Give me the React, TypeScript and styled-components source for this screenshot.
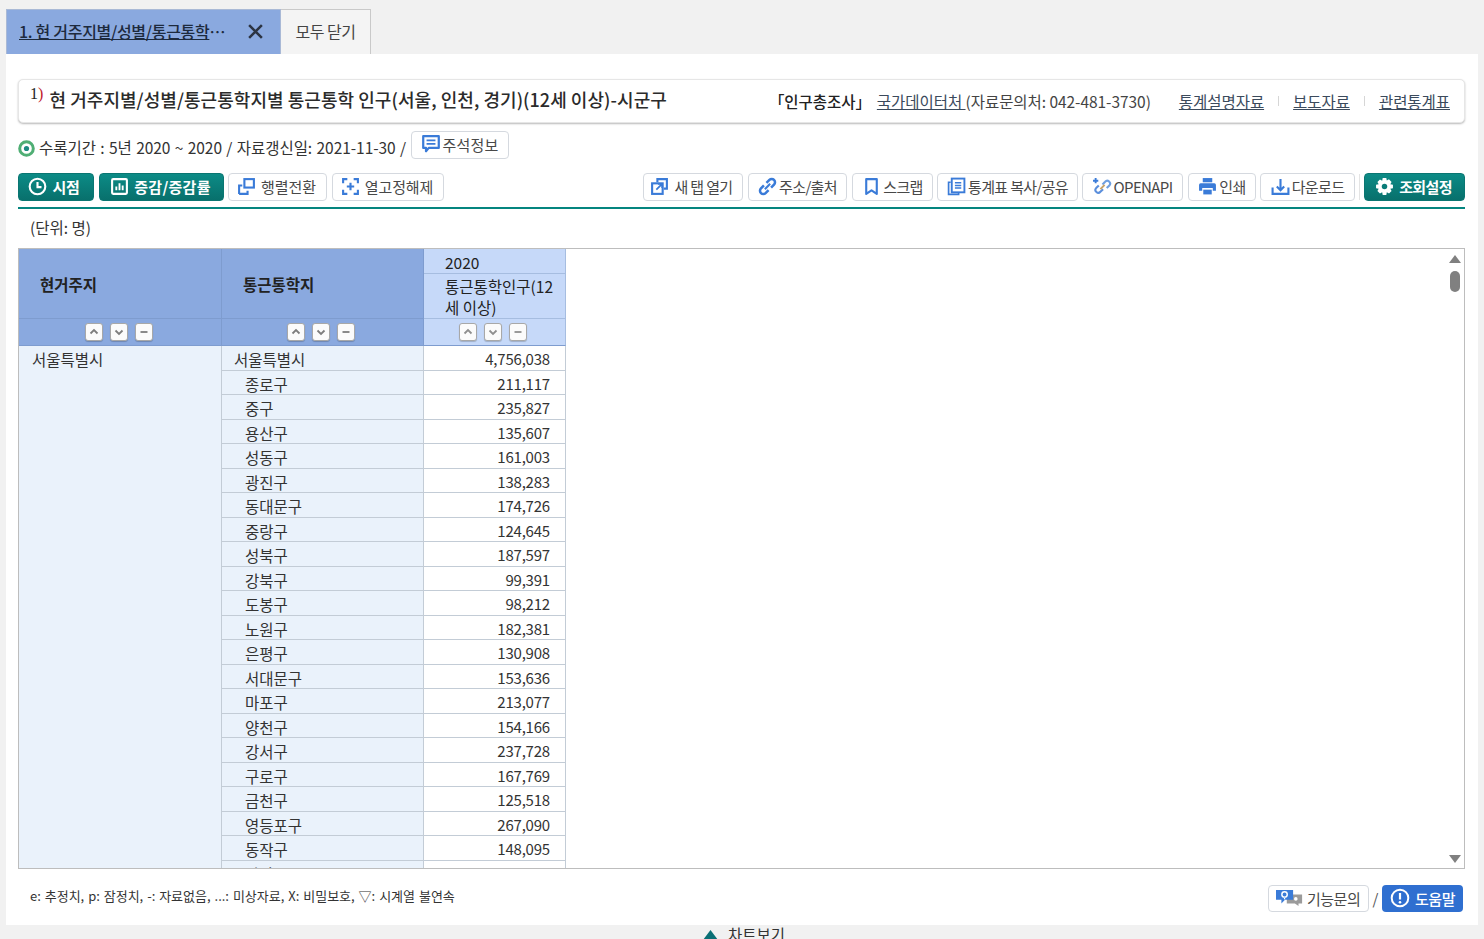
import React from "react";
import styled, { createGlobalStyle } from "styled-components";

const GlobalStyle = createGlobalStyle`
  html, body {
    margin: 0;
    padding: 0;
    background: #f1f1f1;
  }
  body {
    font-family: "Noto Sans CJK KR", "Noto Sans", sans-serif;
    color: #333;
  }
  * {
    box-sizing: border-box;
  }
`;

const Page = styled.div`
  width: 1484px;
  height: 939px;
  padding: 9px 6px 0;
  overflow: hidden;
  background: #f1f1f1;
`;

const TabBar = styled.div`
  display: flex;
  height: 45px;
`;

const ActiveTab = styled.div`
  display: flex;
  align-items: center;
  width: 275px;
  padding: 0 0 2px 12px;
  background: #8aa9df;
  border: 1px solid #a9b9d6;
  border-bottom: none;
  font-size: 16px;
  font-weight: 500;
  letter-spacing: -0.3px;
  color: #1d2a3d;
`;

const TabTitle = styled.span`
  text-decoration: underline;
  white-space: nowrap;
`;

const TabEllipsis = styled.span`
  margin-right: 22px;
`;

const CloseAllTab = styled.div`
  display: flex;
  align-items: center;
  justify-content: center;
  width: 90px;
  padding-bottom: 2px;
  background: #f4f4f4;
  border: 1px solid #c9c9c9;
  border-left: none;
  border-bottom: none;
  font-size: 16px;
  letter-spacing: -0.5px;
  color: #444;
`;

const Panel = styled.div`
  height: 871px;
  width: 1472px;
  padding: 25px 13px 0 12px;
  background: #fff;
`;

const TitleBar = styled.div`
  display: flex;
  align-items: center;
  justify-content: space-between;
  height: 44px;
  padding: 0 14px 0 11px;
  background: #fff;
  border: 1px solid #e6e6e6;
  border-radius: 5px;
  box-shadow: 0 1px 2px rgba(0, 0, 0, 0.28);
`;

const TitleText = styled.div`
  display: flex;
  align-items: center;
  margin-bottom: 4px;
  font-size: 18px;
  font-weight: 500;
  letter-spacing: 0.05px;
  color: #2b2b2b;
  white-space: nowrap;
`;

const Note = styled.sup`
  align-self: flex-start;
  margin: 0 6px 0 0;
  font-family: "Liberation Serif", serif;
  font-size: 16px;
  font-weight: 400;
  line-height: 1;
  color: #222;
  & > span {
    color: #c0202a;
  }
`;

const SourceBox = styled.div`
  display: flex;
  align-items: center;
  font-size: 15.5px;
  letter-spacing: -0.05px;
  color: #444;
  white-space: nowrap;
`;

const Survey = styled.span`
  margin-right: 6px;
  font-weight: 500;
  color: #222;
`;

const SourceLink = styled.a`
  color: #3b4a5c;
  text-decoration: underline;
  white-space: pre;
`;

const Contact = styled.span`
  margin-right: 28px;
`;

const Sep = styled.i`
  width: 1px;
  height: 10px;
  margin: 0 14px;
  background: #d6d6d6;
`;

const InfoRow = styled.div`
  display: flex;
  align-items: flex-start;
  gap: 4px;
  height: 29px;
  margin-top: 8px;
  font-size: 15.5px;
  letter-spacing: -0.05px;
  word-spacing: 1px;
  color: #333;
`;

const InfoText = styled.span`
  margin-top: 5px;
  line-height: 22px;
  white-space: nowrap;
`;

const InfoIcon = styled.svg`
  flex: none;
  width: 17px;
  height: 17px;
  margin-top: 9px;
`;

const Toolbar = styled.div`
  display: flex;
  align-items: flex-start;
  justify-content: space-between;
  height: 36px;
  margin-top: 13px;
  border-bottom: 2px solid #04857f;
`;

const ButtonGroup = styled.div`
  display: flex;
  align-items: center;
`;

const ToolButton = styled.button<{
  $w: number;
  $gap?: number;
  $spacing?: number;
  $iconGap?: number;
  $pad?: number;
}>`
  display: flex;
  align-items: center;
  justify-content: center;
  gap: ${({ $iconGap }) => $iconGap ?? 2}px;
  width: ${({ $w }) => $w}px;
  height: 28px;
  margin-left: ${({ $gap }) => $gap ?? 0}px;
  padding: 0 ${({ $pad }) => $pad ?? 0}px 2px 0;
  background: #fff;
  border: 1px solid #d5d9df;
  border-radius: 4px;
  font-family: inherit;
  font-size: 15px;
  letter-spacing: ${({ $spacing }) => $spacing ?? -0.65}px;
  word-spacing: 0;
  color: #484848;
  white-space: nowrap;
`;

const TealButton = styled(ToolButton)`
  background: linear-gradient(#0c8b86, #08706c);
  border: 1px solid #0a7672;
  font-weight: 700;
  color: #fff;
`;

const ToolDivider = styled.i`
  width: 1px;
  height: 26px;
  margin: 0 4px 0 4px;
  background: #e4e4e4;
`;

const Unit = styled.div`
  height: 39px;
  padding-left: 12px;
  font-size: 15.5px;
  line-height: 37px;
  color: #333;
`;

const TableBox = styled.div`
  display: flex;
  height: 621px;
  border: 1px solid #bdbdbd;
  overflow: hidden;
`;

const TableArea = styled.div`
  width: 547px;
  font-size: 15.5px;
`;

const HeadGrid = styled.div`
  display: grid;
  grid-template-columns: 203px 202px 142px;
  grid-template-rows: 25px 44px 28px;
`;

const HeadDim = styled.div`
  grid-row: 1 / span 2;
  display: flex;
  align-items: center;
  padding-left: 21px;
  background: #8aa9df;
  border-right: 1px solid #7e9ccf;
  font-weight: 700;
  color: #222;
`;

const HeadYear = styled.div`
  padding-left: 21px;
  background: #c6d9f9;
  border-bottom: 1px solid #a6bde0;
  border-right: 1px solid #a6bde0;
  line-height: 26px;
  color: #222;
`;

const HeadItem = styled.div`
  padding: 2px 8px 0 21px;
  background: #c6d9f9;
  border-right: 1px solid #a6bde0;
  line-height: 21px;
  color: #222;
`;

const SortCell = styled.div<{ $light?: boolean }>`
  display: flex;
  align-items: center;
  justify-content: center;
  gap: 7px;
  padding-right: 3px;
  background: ${({ $light }) => ($light ? "#c6d9f9" : "#8aa9df")};
  border-top: 1px solid ${({ $light }) => ($light ? "#a6bde0" : "#7e9ccf")};
  border-right: 1px solid ${({ $light }) => ($light ? "#a6bde0" : "#7e9ccf")};
  border-bottom: 1px solid #7e9ccf;
`;

const SortButton = styled.span`
  display: flex;
  align-items: center;
  justify-content: center;
  width: 18px;
  height: 18px;
  background: #fbfbfb;
  border: 1px solid #a8a8a8;
  border-radius: 3px;
  box-shadow: 0 1px 1px rgba(0, 0, 0, 0.2);
`;

const BodyGrid = styled.div<{ $rows: number }>`
  display: grid;
  grid-template-columns: 203px 202px 142px;
  grid-template-rows: repeat(${({ $rows }) => $rows}, 24.5px);
`;

const RegionCell = styled.div<{ $rows: number }>`
  grid-row: 1 / span ${({ $rows }) => $rows};
  padding: 1px 0 0 13px;
  background: #eaf2fb;
  border-right: 1px solid #c3ccd6;
  line-height: 25px;
`;

const NameCell = styled.div<{ $sub: boolean }>`
  padding-left: ${({ $sub }) => ($sub ? 23 : 12)}px;
  background: #eaf2fb;
  border-right: 1px solid #c3ccd6;
  border-bottom: 1px solid #c3ccd6;
  overflow: hidden;
  line-height: 27px;
  white-space: nowrap;
`;

const ValueCell = styled.div`
  padding-right: 15px;
  background: #fff;
  border-right: 1px solid #c3ccd6;
  border-bottom: 1px solid #c3ccd6;
  font-size: 15px;
  letter-spacing: -0.2px;
  line-height: 25px;
  text-align: right;
`;

const ScrollTrack = styled.div`
  display: flex;
  flex-direction: column;
  align-items: center;
  width: 18px;
  margin-left: auto;
  padding: 6px 0 5px;
  background: #fff;
`;

const ScrollThumb = styled.div`
  width: 10px;
  height: 21px;
  margin-top: 8px;
  background: #808080;
  border-radius: 5px;
`;

const ScrollDown = styled.svg`
  margin-top: auto;
`;

const FooterRow = styled.div`
  display: flex;
  align-items: center;
  justify-content: space-between;
  height: 58px;
  padding: 0 2px 0 12px;
`;

const Legend = styled.div`
  margin-bottom: 5px;
  font-size: 13px;
  word-spacing: 1px;
  color: #333;
`;

const HelpGroup = styled.div`
  display: flex;
  align-items: center;
  font-size: 15px;
  letter-spacing: -0.5px;
`;

const InquiryButton = styled.button`
  display: flex;
  align-items: center;
  justify-content: center;
  gap: 4px;
  width: 101px;
  height: 27px;
  padding: 0;
  background: #fff;
  border: 1px solid #d5d9df;
  border-radius: 4px;
  font-family: inherit;
  font-size: 15px;
  letter-spacing: -0.5px;
  color: #484848;
`;

const Slash = styled.span`
  margin: 0 4px;
  color: #555;
`;

const HelpButton = styled.button`
  display: flex;
  align-items: center;
  justify-content: center;
  gap: 5px;
  width: 81px;
  height: 27px;
  padding: 0;
  background: #2f6fd0;
  border: none;
  border-radius: 4px;
  font-family: inherit;
  font-size: 15px;
  font-weight: 500;
  letter-spacing: -0.5px;
  color: #fff;
`;

const ChartToggle = styled.div`
  display: flex;
  align-items: center;
  justify-content: center;
  gap: 9px;
  height: 18px;
  margin-left: 3px;
  font-size: 15.5px;
  color: #333;
`;

const BLUE = "#3a7bd8";

function Ico({ children, size = 19 }: { children: React.ReactNode; size?: number }) {
  return (
    <svg width={size} height={size} viewBox="0 0 18 18" fill="none" style={{ flex: "none" }}>
      {children}
    </svg>
  );
}

const ClockIcon = () => (
  <Ico>
    <circle cx="9" cy="9" r="7.4" stroke="#fff" strokeWidth="2" />
    <path d="M9 4.8V9.6H12.8" stroke="#fff" strokeWidth="2" />
  </Ico>
);

const BarsIcon = () => (
  <Ico>
    <rect x="2" y="2" width="14" height="14" rx="1" stroke="#fff" strokeWidth="2" />
    <path d="M6 12.5V9M9 12.5V6M12 12.5V8" stroke="#fff" strokeWidth="1.8" />
  </Ico>
);

const PivotIcon = () => (
  <Ico>
    <rect x="7" y="2" width="9" height="8" stroke={BLUE} strokeWidth="2" />
    <path d="M2 16V8H5M2 16H10V13" stroke={BLUE} strokeWidth="2" />
  </Ico>
);

const FreezeIcon = () => (
  <Ico>
    <path d="M6 2H2V6M12 2H16V6M2 12V16H6M16 12V16H12" stroke={BLUE} strokeWidth="2" />
    <path d="M9 5.5V12.5M5.5 9H12.5" stroke={BLUE} strokeWidth="2" />
  </Ico>
);

const NewTabIcon = () => (
  <Ico>
    <path d="M7 5V2H16V11H13" stroke={BLUE} strokeWidth="2" />
    <rect x="2" y="6" width="10" height="10" stroke={BLUE} strokeWidth="2" />
    <path d="M6 12L11 7M7.5 6.5H11.5V10.5" stroke={BLUE} strokeWidth="1.6" />
  </Ico>
);

const ChainIcon = () => (
  <Ico>
    <path d="M8 5.5L10.8 2.8A2.8 2.8 0 0 1 15.2 7.2L12.4 10" stroke={BLUE} strokeWidth="2.4" />
    <path d="M10 12.5L7.2 15.2A2.8 2.8 0 0 1 2.8 10.8L5.6 8" stroke={BLUE} strokeWidth="2.4" />
    <path d="M6.5 11.5L11.5 6.5" stroke={BLUE} strokeWidth="2" />
  </Ico>
);

const BookmarkIcon = () => (
  <Ico>
    <path d="M4 2H14V16L9 12.6L4 16V2Z" stroke={BLUE} strokeWidth="2" strokeLinejoin="round" />
  </Ico>
);

const CopyTableIcon = () => (
  <Ico>
    <path d="M3.5 5H1.5V16.5H11V15" stroke={BLUE} strokeWidth="1.6" />
    <rect x="4.5" y="1.5" width="12" height="13" stroke={BLUE} strokeWidth="1.8" />
    <path d="M7.5 5.5H13.5M7.5 8H13.5M7.5 10.5H13.5" stroke={BLUE} strokeWidth="1.4" />
  </Ico>
);

const ApiIcon = () => (
  <Ico>
    <path d="M2.5 1V6M0 3.5H5" stroke={BLUE} strokeWidth="1.8" />
    <path d="M9 7L11.5 4.5A2.3 2.3 0 0 1 15.5 8L13 10.5" stroke="#6f9fe0" strokeWidth="2" />
    <path d="M9.5 11.5L7 14A2.3 2.3 0 0 1 3 10.5L5.5 8" stroke="#5b8fdc" strokeWidth="2" />
    <path d="M7 11.5L11 7.5" stroke="#c8a36a" strokeWidth="1.8" />
  </Ico>
);

const PrintIcon = () => (
  <Ico>
    <rect x="4.5" y="1" width="9" height="4" fill={BLUE} />
    <path d="M1 7.5A1.5 1.5 0 0 1 2.5 6H15.5A1.5 1.5 0 0 1 17 7.5V13H14V10.5H4V13H1V7.5Z" fill={BLUE} />
    <rect x="5" y="12" width="8" height="4.5" fill={BLUE} />
  </Ico>
);

const DownloadIcon = () => (
  <Ico>
    <path d="M1.5 10V16H16.5V10" stroke={BLUE} strokeWidth="2" />
    <path d="M9 2V12M5.5 9L9 12.5L12.5 9" stroke={BLUE} strokeWidth="2" />
  </Ico>
);

const GearIcon = () => (
  <Ico>
    <path
      d="M7.3 1H10.7L11.2 3.4L13.2 2.2L15.7 4.7L14.5 6.8L17 7.3V10.7L14.5 11.2L15.7 13.3L13.3 15.7L11.2 14.5L10.7 17H7.3L6.8 14.5L4.7 15.7L2.3 13.3L3.5 11.2L1 10.7V7.3L3.5 6.8L2.3 4.7L4.7 2.3L6.8 3.5L7.3 1Z"
      fill="#fff"
    />
    <circle cx="9" cy="9" r="2.6" fill="#0a7c78" />
  </Ico>
);

const NoteIcon = () => (
  <Ico size={20}>
    <path d="M2 2H16V12.5H7L4.5 15.5V12.5H2V2Z" stroke={BLUE} strokeWidth="2" strokeLinejoin="round" />
    <path d="M5 5.8H13M5 8.8H13" stroke={BLUE} strokeWidth="1.6" />
  </Ico>
);

const SpeechIcon = () => (
  <svg width="27" height="18" viewBox="0 0 30 20" style={{ flex: "none" }}>
    <path d="M12 6H29V16H25V19L21 16H12V6Z" fill="#9b9b9b" />
    <path d="M0 1H19V12H10L6 16V12H0V1Z" fill={BLUE} />
    <circle cx="9.5" cy="6" r="3" fill="none" stroke="#fff" strokeWidth="1.6" />
    <path d="M9.5 10V11.5" stroke="#fff" strokeWidth="1.4" />
    <circle cx="22" cy="11" r="2" fill="#fff" />
  </svg>
);

const InfoCircleIcon = () => (
  <svg width="20" height="20" viewBox="0 0 20 20" style={{ flex: "none" }}>
    <circle cx="10" cy="10" r="8.3" fill="none" stroke="#fff" strokeWidth="2" />
    <path d="M10 5V11.5" stroke="#fff" strokeWidth="2.2" />
    <circle cx="10" cy="14.3" r="1.3" fill="#fff" />
  </svg>
);

const Triangle = ({ up, color, w, h }: { up: boolean; color: string; w: number; h: number }) =>
  up ? (
    <svg width={w} height={h} viewBox="0 0 12 8" style={{ flex: "none" }}>
      <path d="M6 0L12 8H0Z" fill={color} />
    </svg>
  ) : (
    <ScrollDown width={w} height={h} viewBox="0 0 12 8">
      <path d="M0 0H12L6 8Z" fill={color} />
    </ScrollDown>
  );

function SortButtons({ light }: { light?: boolean }) {
  const color = light ? "#8f8f8f" : "#7d7d7d";
  return (
    <SortCell $light={light}>
      <SortButton>
        <svg width="10" height="10" viewBox="0 0 10 10">
          <path d="M1.5 6.5L5 3L8.5 6.5" fill="none" stroke={color} strokeWidth="1.8" />
        </svg>
      </SortButton>
      <SortButton>
        <svg width="10" height="10" viewBox="0 0 10 10">
          <path d="M1.5 3.5L5 7L8.5 3.5" fill="none" stroke={color} strokeWidth="1.8" />
        </svg>
      </SortButton>
      <SortButton>
        <svg width="10" height="10" viewBox="0 0 10 10">
          <path d="M1.5 5H8.5" fill="none" stroke={color} strokeWidth="1.8" />
        </svg>
      </SortButton>
    </SortCell>
  );
}

const rows: [string, string][] = [
  ["서울특별시", "4,756,038"],
  ["종로구", "211,117"],
  ["중구", "235,827"],
  ["용산구", "135,607"],
  ["성동구", "161,003"],
  ["광진구", "138,283"],
  ["동대문구", "174,726"],
  ["중랑구", "124,645"],
  ["성북구", "187,597"],
  ["강북구", "99,391"],
  ["도봉구", "98,212"],
  ["노원구", "182,381"],
  ["은평구", "130,908"],
  ["서대문구", "153,636"],
  ["마포구", "213,077"],
  ["양천구", "154,166"],
  ["강서구", "237,728"],
  ["구로구", "167,769"],
  ["금천구", "125,518"],
  ["영등포구", "267,090"],
  ["동작구", "148,095"],
  ["관악구", ""],
];

const leftTools = [
  { label: "행렬전환", w: 99, gap: 4, icon: <PivotIcon /> },
  { label: "열고정해제", w: 112, gap: 5, icon: <FreezeIcon /> },
];

const rightTools = [
  { label: "새 탭 열기", w: 100, gap: 0, iconGap: 5, pad: 3, icon: <NewTabIcon /> },
  { label: "주소/출처", w: 99, gap: 5, icon: <ChainIcon /> },
  { label: "스크랩", w: 81, gap: 5, icon: <BookmarkIcon /> },
  { label: "통계표 복사/공유", w: 141, gap: 4, icon: <CopyTableIcon /> },
  { label: "OPENAPI", w: 101, gap: 4, icon: <ApiIcon /> },
  { label: "인쇄", w: 68, gap: 5, icon: <PrintIcon /> },
  { label: "다운로드", w: 95, gap: 4, icon: <DownloadIcon /> },
];

export default function App() {
  return (
    <Page>
      <GlobalStyle />
      <TabBar>
        <ActiveTab>
          <TabTitle>1. 현 거주지별/성별/통근통학</TabTitle>
          <TabEllipsis>⋯</TabEllipsis>
          <svg width="17" height="17" viewBox="0 0 16 16">
            <path d="M2 2L14 14M14 2L2 14" stroke="#2c3442" strokeWidth="2.4" />
          </svg>
        </ActiveTab>
        <CloseAllTab>모두 닫기</CloseAllTab>
      </TabBar>
      <Panel>
        <TitleBar>
          <TitleText>
            <Note>
              1<span>)</span>
            </Note>
            현 거주지별/성별/통근통학지별 통근통학 인구(서울, 인천, 경기)(12세 이상)-시군구
          </TitleText>
          <SourceBox>
            <Survey>「인구총조사」</Survey>
            <SourceLink>국가데이터처 </SourceLink>
            <Contact>(자료문의처: 042-481-3730)</Contact>
            <SourceLink>통계설명자료</SourceLink>
            <Sep />
            <SourceLink>보도자료</SourceLink>
            <Sep />
            <SourceLink>관련통계표</SourceLink>
          </SourceBox>
        </TitleBar>
        <InfoRow>
          <InfoIcon viewBox="0 0 17 17">
            <circle cx="8.5" cy="8.5" r="6.8" fill="none" stroke="#4fae74" strokeWidth="3" />
            <circle cx="8.5" cy="8.5" r="2.6" fill="#1d8a80" />
          </InfoIcon>
          <InfoText>수록기간 : 5년 2020 ~ 2020 / 자료갱신일: 2021-11-30 /</InfoText>
          <ToolButton $w={98} $gap={1} $spacing={0.2} $pad={1}>
            <NoteIcon />
            주석정보
          </ToolButton>
        </InfoRow>
        <Toolbar>
          <ButtonGroup>
            <TealButton $w={76} $spacing={-0.3} $iconGap={5} $pad={4}>
              <ClockIcon />
              시점
            </TealButton>
            <TealButton $w={125} $gap={5} $spacing={0.3} $iconGap={5} $pad={2}>
              <BarsIcon />
              증감/증감률
            </TealButton>
            {leftTools.map((tool) => (
              <ToolButton key={tool.label} $w={tool.w} $gap={tool.gap} $spacing={-0.1} $iconGap={5} $pad={2}>
                {tool.icon}
                {tool.label}
              </ToolButton>
            ))}
          </ButtonGroup>
          <ButtonGroup>
            {rightTools.map((tool) => (
              <ToolButton key={tool.label} $w={tool.w} $gap={tool.gap} $iconGap={tool.iconGap} $pad={tool.pad}>
                {tool.icon}
                {tool.label}
              </ToolButton>
            ))}
            <ToolDivider />
            <TealButton $w={101} $iconGap={5} $pad={2}>
              <GearIcon />
              조회설정
            </TealButton>
          </ButtonGroup>
        </Toolbar>
        <Unit>(단위: 명)</Unit>
        <TableBox>
          <TableArea>
            <HeadGrid>
              <HeadDim>현거주지</HeadDim>
              <HeadDim>통근통학지</HeadDim>
              <HeadYear>2020</HeadYear>
              <HeadItem>통근통학인구(12세 이상)</HeadItem>
              <SortButtons />
              <SortButtons />
              <SortButtons light />
            </HeadGrid>
            <BodyGrid $rows={rows.length}>
              <RegionCell $rows={rows.length}>서울특별시</RegionCell>
              {rows.map(([name, value], index) => (
                <React.Fragment key={name}>
                  <NameCell $sub={index > 0}>{name}</NameCell>
                  <ValueCell>{value}</ValueCell>
                </React.Fragment>
              ))}
            </BodyGrid>
          </TableArea>
          <ScrollTrack>
            <Triangle up color="#808080" w={12} h={8} />
            <ScrollThumb />
            <Triangle up={false} color="#808080" w={12} h={8} />
          </ScrollTrack>
        </TableBox>
        <FooterRow>
          <Legend>e: 추정치, p: 잠정치, -: 자료없음, ...: 미상자료, X: 비밀보호, ▽: 시계열 불연속</Legend>
          <HelpGroup>
            <InquiryButton>
              <SpeechIcon />
              기능문의
            </InquiryButton>
            <Slash>/</Slash>
            <HelpButton>
              <InfoCircleIcon />
              도움말
            </HelpButton>
          </HelpGroup>
        </FooterRow>
      </Panel>
      <ChartToggle>
        <Triangle up color="#0a6f75" w={17} h={9} />
        차트보기
      </ChartToggle>
    </Page>
  );
}
